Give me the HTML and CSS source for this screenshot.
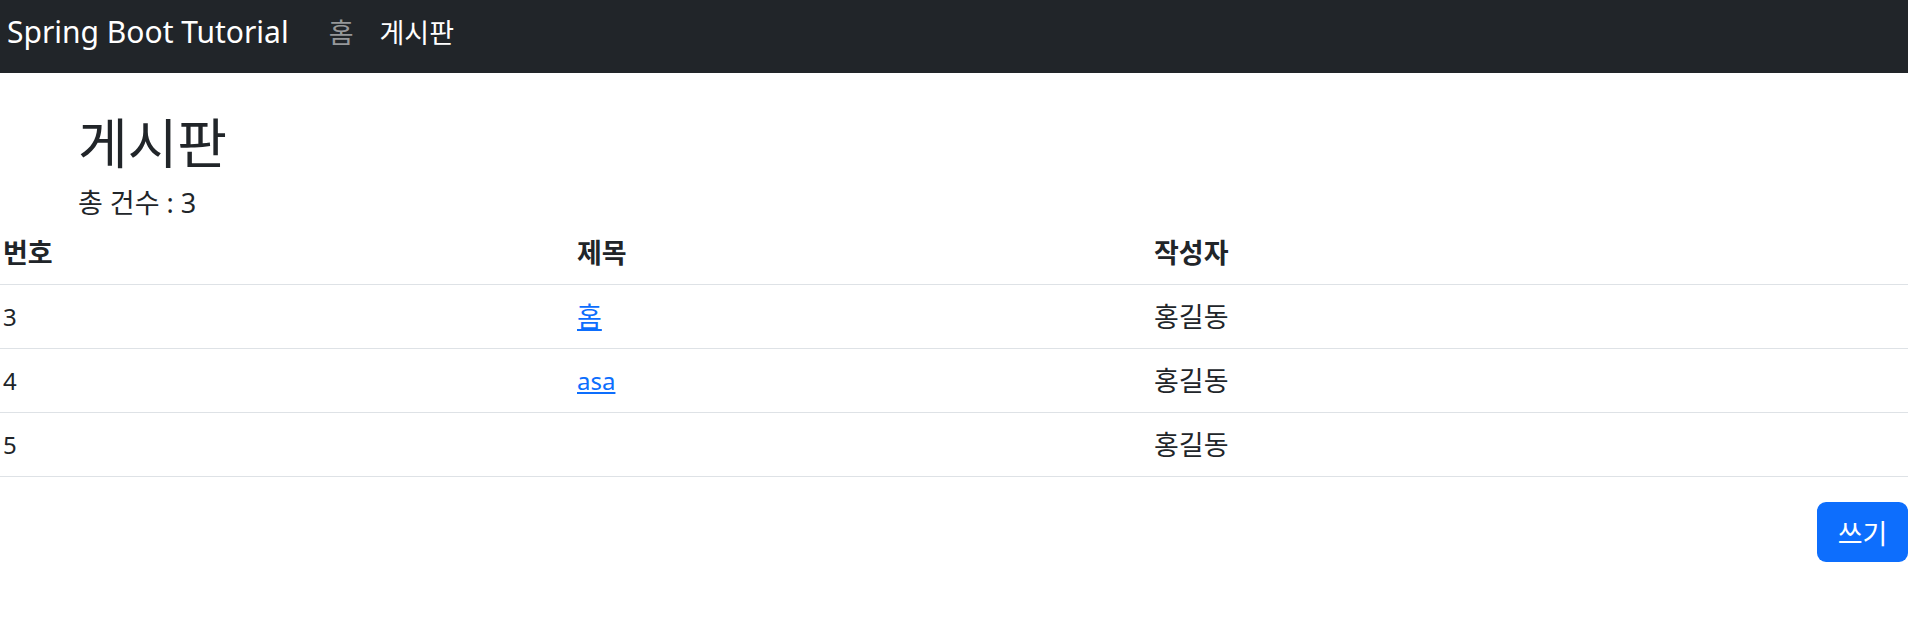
FILE: index.html
```html
<!DOCTYPE html>
<html lang="ko">
<head>
    <meta charset="UTF-8">
    <title>게시판</title>
    <link rel="stylesheet" href="styles.css">
</head>
<body>

<nav class="navbar">
    <a class="brand" href="#">Spring Boot Tutorial</a>
    <ul class="nav-links">
        <li><a href="#">홈</a></li>
        <li><a class="active" href="#">게시판</a></li>
    </ul>
</nav>

<div class="board-head">
    <h2>게시판</h2>
    <p class="count">총 건수 : 3</p>
</div>

<table class="board">
    <colgroup>
        <col class="col-no">
        <col class="col-title">
        <col>
    </colgroup>
    <thead>
        <tr>
            <th>번호</th>
            <th>제목</th>
            <th>작성자</th>
        </tr>
    </thead>
    <tbody>
        <tr>
            <td>3</td>
            <td><a class="ko" href="#">홈</a></td>
            <td class="ko">홍길동</td>
        </tr>
        <tr>
            <td>4</td>
            <td><a href="#">asa</a></td>
            <td class="ko">홍길동</td>
        </tr>
        <tr>
            <td>5</td>
            <td></td>
            <td class="ko">홍길동</td>
        </tr>
    </tbody>
</table>

<div class="actions">
    <button class="write-btn" type="button">쓰기</button>
</div>

</body>
</html>
```

FILE: styles.css
```css
body {
    margin: 0;
    font-family: "Noto Sans", "Noto Sans CJK KR", sans-serif;
    font-size: 24px;
    color: #212529;
    background-color: #fff;
}

.navbar {
    display: flex;
    align-items: center;
    height: 73px;
    padding: 0 0 11px 7px;
    box-sizing: border-box;
    background-color: #212529;
}
.brand {
    font-size: 30px;
    color: #fff;
    text-decoration: none;
    margin-right: 40px;
}
.nav-links {
    display: flex;
    gap: 26px;
    list-style: none;
    margin: 0;
    padding: 0;
}
.nav-links a {
    font-size: 27px;
    color: rgba(255, 255, 255, .55);
    text-decoration: none;
}
.nav-links a.active {
    color: #fff;
}

.board-head {
    padding-left: 78px;
}
.board-head h2 {
    font-size: 54px;
    font-weight: 400;
    line-height: 60px;
    margin: 40px 0 12px;
}
.count {
    margin: 0;
    font-size: 27px;
    line-height: 36px;
}

table.board {
    width: 100%;
    border-spacing: 0;
    table-layout: fixed;
}
.col-no {
    width: 574px;
}
.col-title {
    width: 577px;
}
table.board th,
table.board td {
    text-align: left;
    padding: 0 0 0 3px;
    line-height: 63px;
    border-bottom: 1px solid #dee2e6;
}
table.board th,
table.board .ko {
    font-size: 27px;
}
table.board a.ko {
    vertical-align: top;
}
table.board th {
    font-weight: 700;
}
table.board a {
    color: #0d6efd;
}

.actions {
    display: flex;
    justify-content: flex-end;
    margin-top: 25px;
}
.write-btn {
    font-family: inherit;
    font-size: 27px;
    color: #fff;
    background-color: #0d6efd;
    border: none;
    border-radius: 9px;
    width: 91px;
    height: 60px;
    cursor: pointer;
}
```
